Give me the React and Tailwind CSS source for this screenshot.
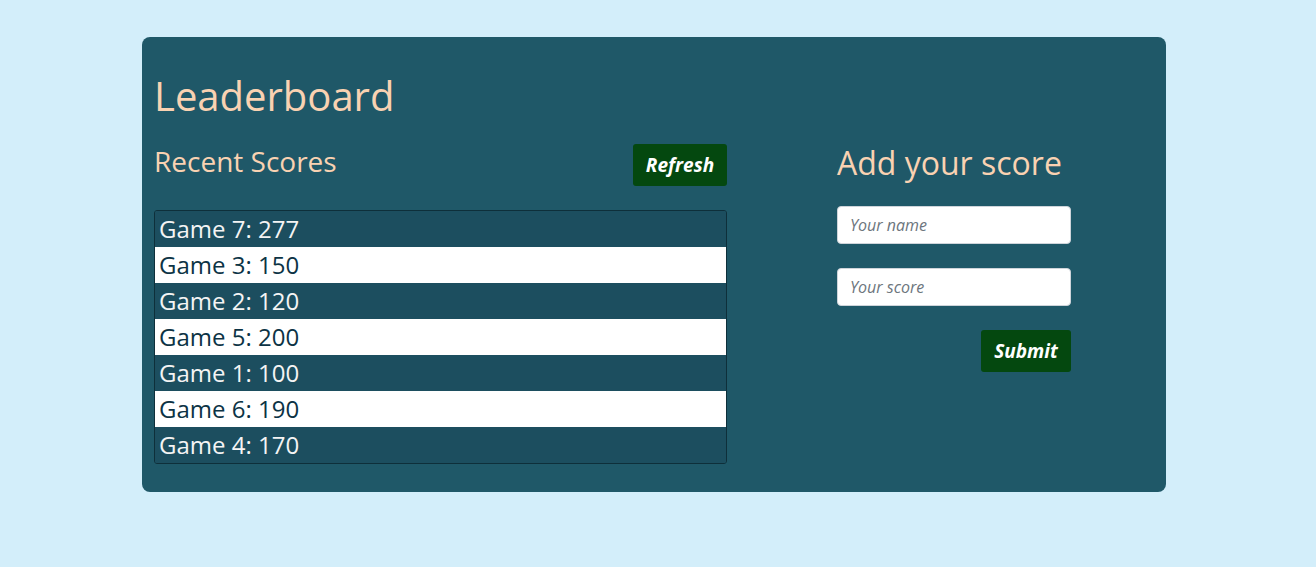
const scores = [
  { name: "Game 7", score: 277 },
  { name: "Game 3", score: 150 },
  { name: "Game 2", score: 120 },
  { name: "Game 5", score: 200 },
  { name: "Game 1", score: 100 },
  { name: "Game 6", score: 190 },
  { name: "Game 4", score: 170 },
];

export default function App() {
  return (
    <div className="min-h-screen bg-[#d3eefa] pt-[37px] font-['Open_Sans',sans-serif]">
      <div className="ml-[142px] w-[1024px] rounded-lg bg-[#1f5868] px-3 pb-[28px]">
        <h1 className="pt-[32px] text-[40px] leading-[54px] text-[#f9d2b2]">Leaderboard</h1>

        <div className="mt-[19px] flex items-start">
          <div className="w-[573px]">
            <div className="flex items-start justify-between">
              <h2 className="text-[28px] leading-[38px] text-[#f9d2b2]">Recent Scores</h2>
              <button className="mt-[2px] h-[42px] w-[94px] rounded-[3px] bg-[#04480f] text-[19px] font-bold italic text-white">
                Refresh
              </button>
            </div>
            <ul className="mt-[24px] overflow-hidden rounded-[3px] border border-[#0e2f3a]">
              {scores.map((s, i) => (
                <li
                  key={s.name}
                  className={
                    i % 2 === 0
                      ? "h-[36px] bg-[#1c4e5f] pl-[4px] text-[24px] leading-[36px] text-[#f4f4f4]"
                      : "h-[36px] bg-white pl-[4px] text-[24px] leading-[36px] text-[#0c3345]"
                  }
                >
                  {s.name}: {s.score}
                </li>
              ))}
            </ul>
          </div>

          <div className="ml-[110px] flex w-[234px] flex-col">
            <h2 className="-mt-px text-[32px] leading-[44px] text-[#f9d2b2]">Add your score</h2>
            <input
              placeholder="Your name"
              className="mt-[21px] h-[38px] rounded-[4px] border border-[#ced4da] bg-white px-3 text-[16px] text-[#333] placeholder:italic placeholder:text-[#6c757d] outline-none"
            />
            <input
              placeholder="Your score"
              className="mt-[24px] h-[38px] rounded-[4px] border border-[#ced4da] bg-white px-3 text-[16px] text-[#333] placeholder:italic placeholder:text-[#6c757d] outline-none"
            />
            <button className="ml-auto mt-[24px] h-[42px] w-[90px] rounded-[3px] bg-[#04480f] text-[19px] font-bold italic text-white">
              Submit
            </button>
          </div>
        </div>
      </div>
    </div>
  );
}
